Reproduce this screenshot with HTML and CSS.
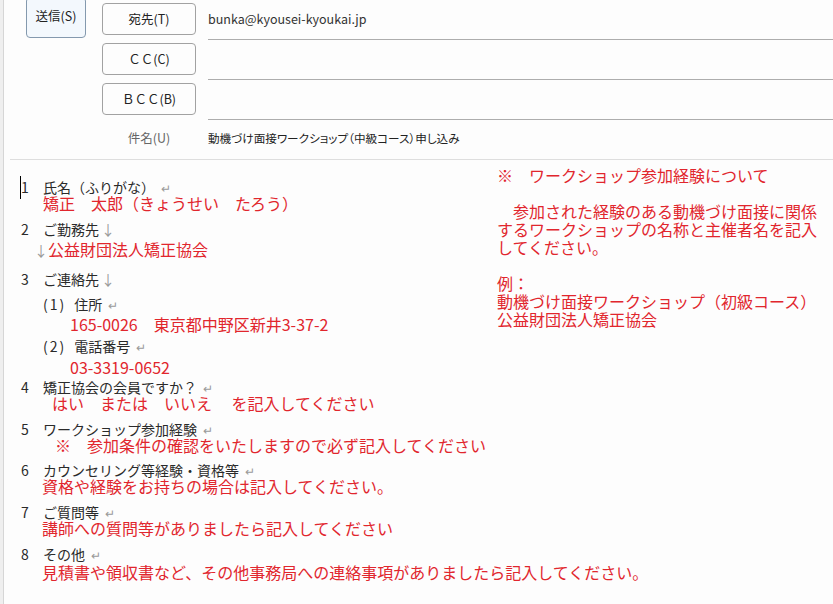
FILE: index.html
```html
<!DOCTYPE html>
<html lang="ja">
<head>
<meta charset="UTF-8">
<meta name="viewport" content="width=device-width, initial-scale=1.0">
<title>メール作成</title>
<link rel="stylesheet" href="styles.css">
</head>
<body>
    <div class="window">
        <div class="gutter"></div>
        <div class="main">
            <div class="compose">
                <div class="send-col">
                    <button class="send-btn" type="button">送信(S)</button>
                </div>
                <div class="fields">
                    <div class="field-row">
                        <button class="addr-btn" type="button">宛先(T)</button>
                        <div class="field-value">bunka@kyousei-kyoukai.jp</div>
                    </div>
                    <div class="field-row">
                        <button class="addr-btn" type="button">ＣＣ(C)</button>
                        <div class="field-value"></div>
                    </div>
                    <div class="field-row">
                        <button class="addr-btn" type="button">ＢＣＣ(B)</button>
                        <div class="field-value"></div>
                    </div>
                    <div class="field-row subject">
                        <span class="subject-label">件名(U)</span>
                        <div class="field-value subject-value">動機づけ面接ワークショップ（中級コース）申し込み</div>
                    </div>
                </div>
            </div>
            <div class="divider"></div>

            <div class="doc">
                <span class="cursor"></span>

                <div class="item first">
                    <div class="label"><span class="num">1</span>氏名（ふりがな）<span class="mark">↵</span></div>
                    <div class="answer">矯正　太郎（きょうせい　たろう）</div>
                </div>

                <div class="item">
                    <div class="label"><span class="num">2</span>ご勤務先<span class="mark down">↓</span></div>
                    <div class="answer after-break"><span class="mark down lead">↓</span>公益財団法人矯正協会</div>
                </div>

                <div class="item wide">
                    <div class="label"><span class="num">3</span>ご連絡先<span class="mark down">↓</span></div>
                    <div class="sub first-sub"><span class="paren">(1)</span>住所<span class="mark">↵</span></div>
                    <div class="answer deep">165-0026　東京都中野区新井3-37-2</div>
                    <div class="sub"><span class="paren">(2)</span>電話番号<span class="mark">↵</span></div>
                    <div class="answer deep phone">03-3319-0652</div>
                </div>

                <div class="item close">
                    <div class="label"><span class="num">4</span>矯正協会の会員ですか？<span class="mark">↵</span></div>
                    <div class="answer shift-a">はい　または　いいえ　 を記入してください</div>
                </div>

                <div class="item">
                    <div class="label"><span class="num">5</span>ワークショップ参加経験<span class="mark">↵</span></div>
                    <div class="answer shift-b">※　参加条件の確認をいたしますので必ず記入してください</div>
                </div>

                <div class="item mid">
                    <div class="label"><span class="num">6</span>カウンセリング等経験・資格等<span class="mark">↵</span></div>
                    <div class="answer back">資格や経験をお持ちの場合は記入してください。</div>
                </div>

                <div class="item">
                    <div class="label"><span class="num">7</span>ご質問等<span class="mark">↵</span></div>
                    <div class="answer back">講師への質問等がありましたら記入してください</div>
                </div>

                <div class="item">
                    <div class="label"><span class="num">8</span>その他<span class="mark">↵</span></div>
                    <div class="answer back last">見積書や領収書など、その他事務局への連絡事項がありましたら記入してください。</div>
                </div>

                <!-- floating text box from the document -->
                <div class="note">
                    ※　ワークショップ参加経験について<br>
                    <br>
                    　参加された経験のある動機づけ面接に関係<br>
                    するワークショップの名称と主催者名を記入<br>
                    してください。<br>
                    <br>
                    例：<br>
                    動機づけ面接ワークショップ（初級コース）<br>
                    公益財団法人矯正協会
                </div>
            </div>
        </div>
    </div>
</body>
</html>
```

FILE: styles.css
```css
html, body {
    margin: 0;
    padding: 0;
    height: 100%;
}

body {
    font-family: "Noto Sans CJK JP", "Noto Sans", sans-serif;
    background-color: #fdfdfd;
    color: #222;
    overflow: hidden;
}

.window {
    display: flex;
    height: 100%;
}

.gutter {
    width: 3px;
    flex: none;
    background-color: #efefef;
    border-right: 1px solid #d6d6d6;
}

.main {
    flex: 1;
    position: relative;
}

/* ---- compose header ---- */
.compose {
    display: flex;
}

.send-col {
    padding-left: 22px;
    width: 60px;
    flex: none;
}

.send-btn {
    display: block;
    box-sizing: border-box;
    width: 60px;
    height: 41px;
    margin-top: -3px;
    padding: 10px 0 13px;
    font: 12.5px / 16px "Noto Sans CJK JP", sans-serif;
    color: #222;
    background-color: #f3f8fd;
    border: 1px solid #8499ae;
    border-radius: 4px;
    text-align: center;
}

.fields {
    flex: 1;
    margin-left: 16px;
}

.field-row {
    display: flex;
    height: 40px;
}

.addr-btn {
    box-sizing: border-box;
    width: 94px;
    height: 32px;
    margin-top: 3px;
    padding: 0;
    font: 12.5px / 30px "Noto Sans CJK JP", sans-serif;
    color: #222;
    background-color: #fdfdfd;
    border: 1px solid #a2a2a2;
    border-radius: 4px;
    flex: none;
}

.field-value {
    flex: 1;
    box-sizing: border-box;
    height: 40px;
    margin-left: 12px;
    padding-top: 10px;
    font-size: 12.5px;
    line-height: 18px;
    color: #333;
    border-bottom: 1px solid #adadad;
}

.field-row.subject {
    height: 39px;
}

.subject-label {
    width: 94px;
    flex: none;
    text-align: center;
    font-size: 12.5px;
    line-height: 18px;
    padding-top: 9px;
    color: #666;
}

.subject-value {
    height: 39px;
    padding-top: 9px;
    font-size: 11.6px;
    font-feature-settings: "palt";
    color: #222;
    border-bottom: none;
}

.divider {
    height: 1px;
    margin-left: 6px;
    background-color: #dedede;
}

/* ---- message body ---- */
.doc {
    position: relative;
    padding: 20px 0 0 16px;
}

.cursor {
    position: absolute;
    left: 16px;
    top: 16px;
    width: 1px;
    height: 23px;
    background-color: #000;
}

.item {
    margin-top: 11px;
    padding-left: 23px;
}

.item.first {
    margin-top: 0;
}

.item.wide {
    margin-top: 14px;
}

.item.close {
    margin-top: 5px;
}

.item.mid {
    margin-top: 10px;
}

.label,
.sub {
    position: relative;
    font-size: 14px;
    line-height: 15px;
    color: #2a2a2a;
}

.num {
    position: absolute;
    left: -22px;
    top: 0;
}

.sub {
    margin-top: 7px;
}

.sub.first-sub {
    margin-top: 10px;
}

.paren {
    letter-spacing: 2px;
    margin-right: 8px;
}

.mark {
    font-size: 12px;
    color: #9a9a9a;
    margin-left: 6px;
}

.mark.down {
    font-size: 14px;
    margin-left: 2px;
}

.mark.lead {
    margin-left: -9px;
    margin-right: 0;
}

.answer {
    font-size: 16px;
    line-height: 16px;
    color: #e1262d;
    white-space: pre;
}

.answer.after-break {
    margin-top: 4px;
}

.answer.deep {
    margin-top: 4px;
    padding-left: 27px;
}

.answer.phone {
    margin-top: 5px;
}

.answer.shift-a {
    padding-left: 9px;
}

.answer.shift-b {
    padding-left: 12px;
}

.answer.back {
    margin-left: -1px;
}

.answer.last {
    margin-top: 2px;
}

.note {
    position: absolute;
    left: 493px;
    top: 6px;
    width: 330px;
    font-size: 16px;
    line-height: 18px;
    color: #e1262d;
}
```
